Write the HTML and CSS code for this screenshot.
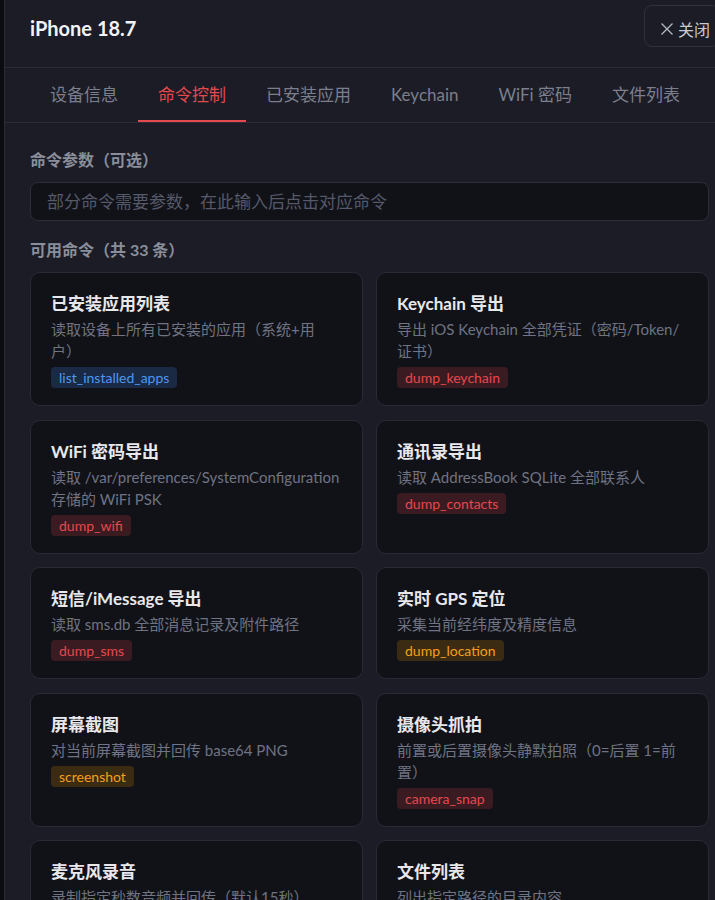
FILE: index.html
```html
<!DOCTYPE html>
<html lang="zh-CN">
<head>
<meta charset="utf-8">
<title>iPhone 18.7</title>
<link rel="stylesheet" href="styles.css">
</head>
<body>
<div class="modal">
  <header class="modal-header">
    <h1 class="modal-title">iPhone 18.7</h1>
    <button class="close-btn" type="button">
      <svg class="close-icon" width="14" height="14" viewBox="0 0 14 14"><path d="M1.5 1.5L12.5 12.5M12.5 1.5L1.5 12.5"/></svg>
      <span>关闭</span>
    </button>
  </header>
  <nav class="tabs">
    <div class="tab">设备信息</div>
    <div class="tab active">命令控制</div>
    <div class="tab">已安装应用</div>
    <div class="tab">Keychain</div>
    <div class="tab">WiFi 密码</div>
    <div class="tab">文件列表</div>
  </nav>
  <main class="content">
    <div class="section-label">命令参数（可选）</div>
    <input class="param-input" type="text" placeholder="部分命令需要参数，在此输入后点击对应命令">
    <div class="section-label section-label-2">可用命令（共 33 条）</div>
    <div class="cmd-grid">
      <div class="cmd-card">
        <div class="cmd-title">已安装应用列表</div>
        <div class="cmd-desc">读取设备上所有已安装的应用（系统+用户）</div>
        <span class="badge badge-blue">list_installed_apps</span>
      </div>
      <div class="cmd-card">
        <div class="cmd-title">Keychain 导出</div>
        <div class="cmd-desc">导出 iOS Keychain 全部凭证（密码/Token/证书）</div>
        <span class="badge badge-red">dump_keychain</span>
      </div>
      <div class="cmd-card">
        <div class="cmd-title">WiFi 密码导出</div>
        <div class="cmd-desc">读取 /var/preferences/SystemConfiguration 存储的 WiFi PSK</div>
        <span class="badge badge-red">dump_wifi</span>
      </div>
      <div class="cmd-card">
        <div class="cmd-title">通讯录导出</div>
        <div class="cmd-desc">读取 AddressBook SQLite 全部联系人</div>
        <span class="badge badge-red">dump_contacts</span>
      </div>
      <div class="cmd-card">
        <div class="cmd-title">短信/iMessage 导出</div>
        <div class="cmd-desc">读取 sms.db 全部消息记录及附件路径</div>
        <span class="badge badge-red">dump_sms</span>
      </div>
      <div class="cmd-card">
        <div class="cmd-title">实时 GPS 定位</div>
        <div class="cmd-desc">采集当前经纬度及精度信息</div>
        <span class="badge badge-orange">dump_location</span>
      </div>
      <div class="cmd-card">
        <div class="cmd-title">屏幕截图</div>
        <div class="cmd-desc">对当前屏幕截图并回传 base64 PNG</div>
        <span class="badge badge-orange">screenshot</span>
      </div>
      <div class="cmd-card">
        <div class="cmd-title">摄像头抓拍</div>
        <div class="cmd-desc">前置或后置摄像头静默拍照（0=后置 1=前置）</div>
        <span class="badge badge-red">camera_snap</span>
      </div>
      <div class="cmd-card">
        <div class="cmd-title">麦克风录音</div>
        <div class="cmd-desc">录制指定秒数音频并回传（默认15秒）</div>
        <span class="badge badge-red">record_audio</span>
      </div>
      <div class="cmd-card">
        <div class="cmd-title">文件列表</div>
        <div class="cmd-desc">列出指定路径的目录内容</div>
        <span class="badge badge-blue">list_files</span>
      </div>
    </div>
  </main>
</div>
</body>
</html>
```
FILE: styles.css
```css
html, body {
  margin: 0;
  padding: 0;
  height: 100%;
  overflow: hidden;
  background: #0b0c10;
}

body {
  font-family: "Lato", "Noto Sans CJK SC", sans-serif;
  color: #e8e8ec;
  text-spacing-trim: space-all;
}

.modal {
  margin-left: 4px;
  width: 736px;
  min-height: 900px;
  box-sizing: border-box;
  background: #1b1c26;
  border-left: 1px solid #2a2c38;
}

.modal-header {
  display: flex;
  justify-content: space-between;
  align-items: flex-start;
  padding: 5px 20px 16px 25px;
  border-bottom: 1px solid #2a2c38;
}

.modal-title {
  margin: 0;
  font-size: 20px;
  font-weight: 700;
  line-height: 46px;
  color: #f3f3f6;
}

.close-btn {
  display: flex;
  align-items: center;
  gap: 4px;
  width: 76px;
  height: 42px;
  box-sizing: border-box;
  padding: 6px 0 0 15px;
  background: transparent;
  border: 1px solid #2e3040;
  border-radius: 8px;
  color: #c9cbd3;
  font-family: inherit;
  font-size: 16px;
  white-space: nowrap;
}

.close-icon path {
  stroke: #b4b7c1;
  stroke-width: 1.3;
  fill: none;
}

.tabs {
  display: flex;
  padding-left: 25px;
  border-bottom: 1px solid #2a2c38;
}

.tab {
  height: 54px;
  box-sizing: border-box;
  padding: 2px 20px 0;
  line-height: 50px;
  font-size: 17px;
  color: #7b7f8d;
  border-bottom: 2px solid transparent;
  white-space: nowrap;
}

.tab.active {
  color: #e5484d;
  border-bottom-color: #e5484d;
}

.content {
  padding: 26px 31px 0 25px;
}

.section-label {
  font-size: 16px;
  font-weight: 700;
  line-height: 22px;
  color: #8a8e9b;
  margin-bottom: 11px;
}

.section-label-2 {
  margin-top: 18px;
}

.param-input {
  display: block;
  width: 100%;
  height: 39px;
  box-sizing: border-box;
  padding: 0 16px;
  background: #111218;
  border: 1px solid #2b2d3a;
  border-radius: 8px;
  font-family: inherit;
  font-size: 17px;
  color: #e8e8ec;
  outline: none;
  text-spacing-trim: space-all;
}

.param-input::placeholder {
  color: #555968;
}

.cmd-grid {
  display: grid;
  grid-template-columns: 1fr 1fr;
  column-gap: 13px;
  row-gap: 13.5px;
}

.cmd-card {
  display: flex;
  flex-direction: column;
  align-items: flex-start;
  background: #111217;
  border: 1px solid #282a36;
  border-radius: 10px;
  padding: 19px 20px 17px;
}

.cmd-title {
  font-size: 17px;
  font-weight: 700;
  line-height: 24px;
  color: #e8e8ec;
}

.cmd-desc {
  margin-top: 2px;
  font-size: 15px;
  line-height: 22px;
  color: #6f7383;
}

.badge {
  margin-top: 5px;
  padding: 0 8px;
  font-size: 14px;
  line-height: 21px;
  border-radius: 4px;
  white-space: nowrap;
}

.badge-blue {
  background: #1a2944;
  color: #4f97ef;
}

.badge-red {
  background: #3a1b22;
  color: #e5484d;
}

.badge-orange {
  background: #3b2b12;
  color: #f3a01b;
}
```
